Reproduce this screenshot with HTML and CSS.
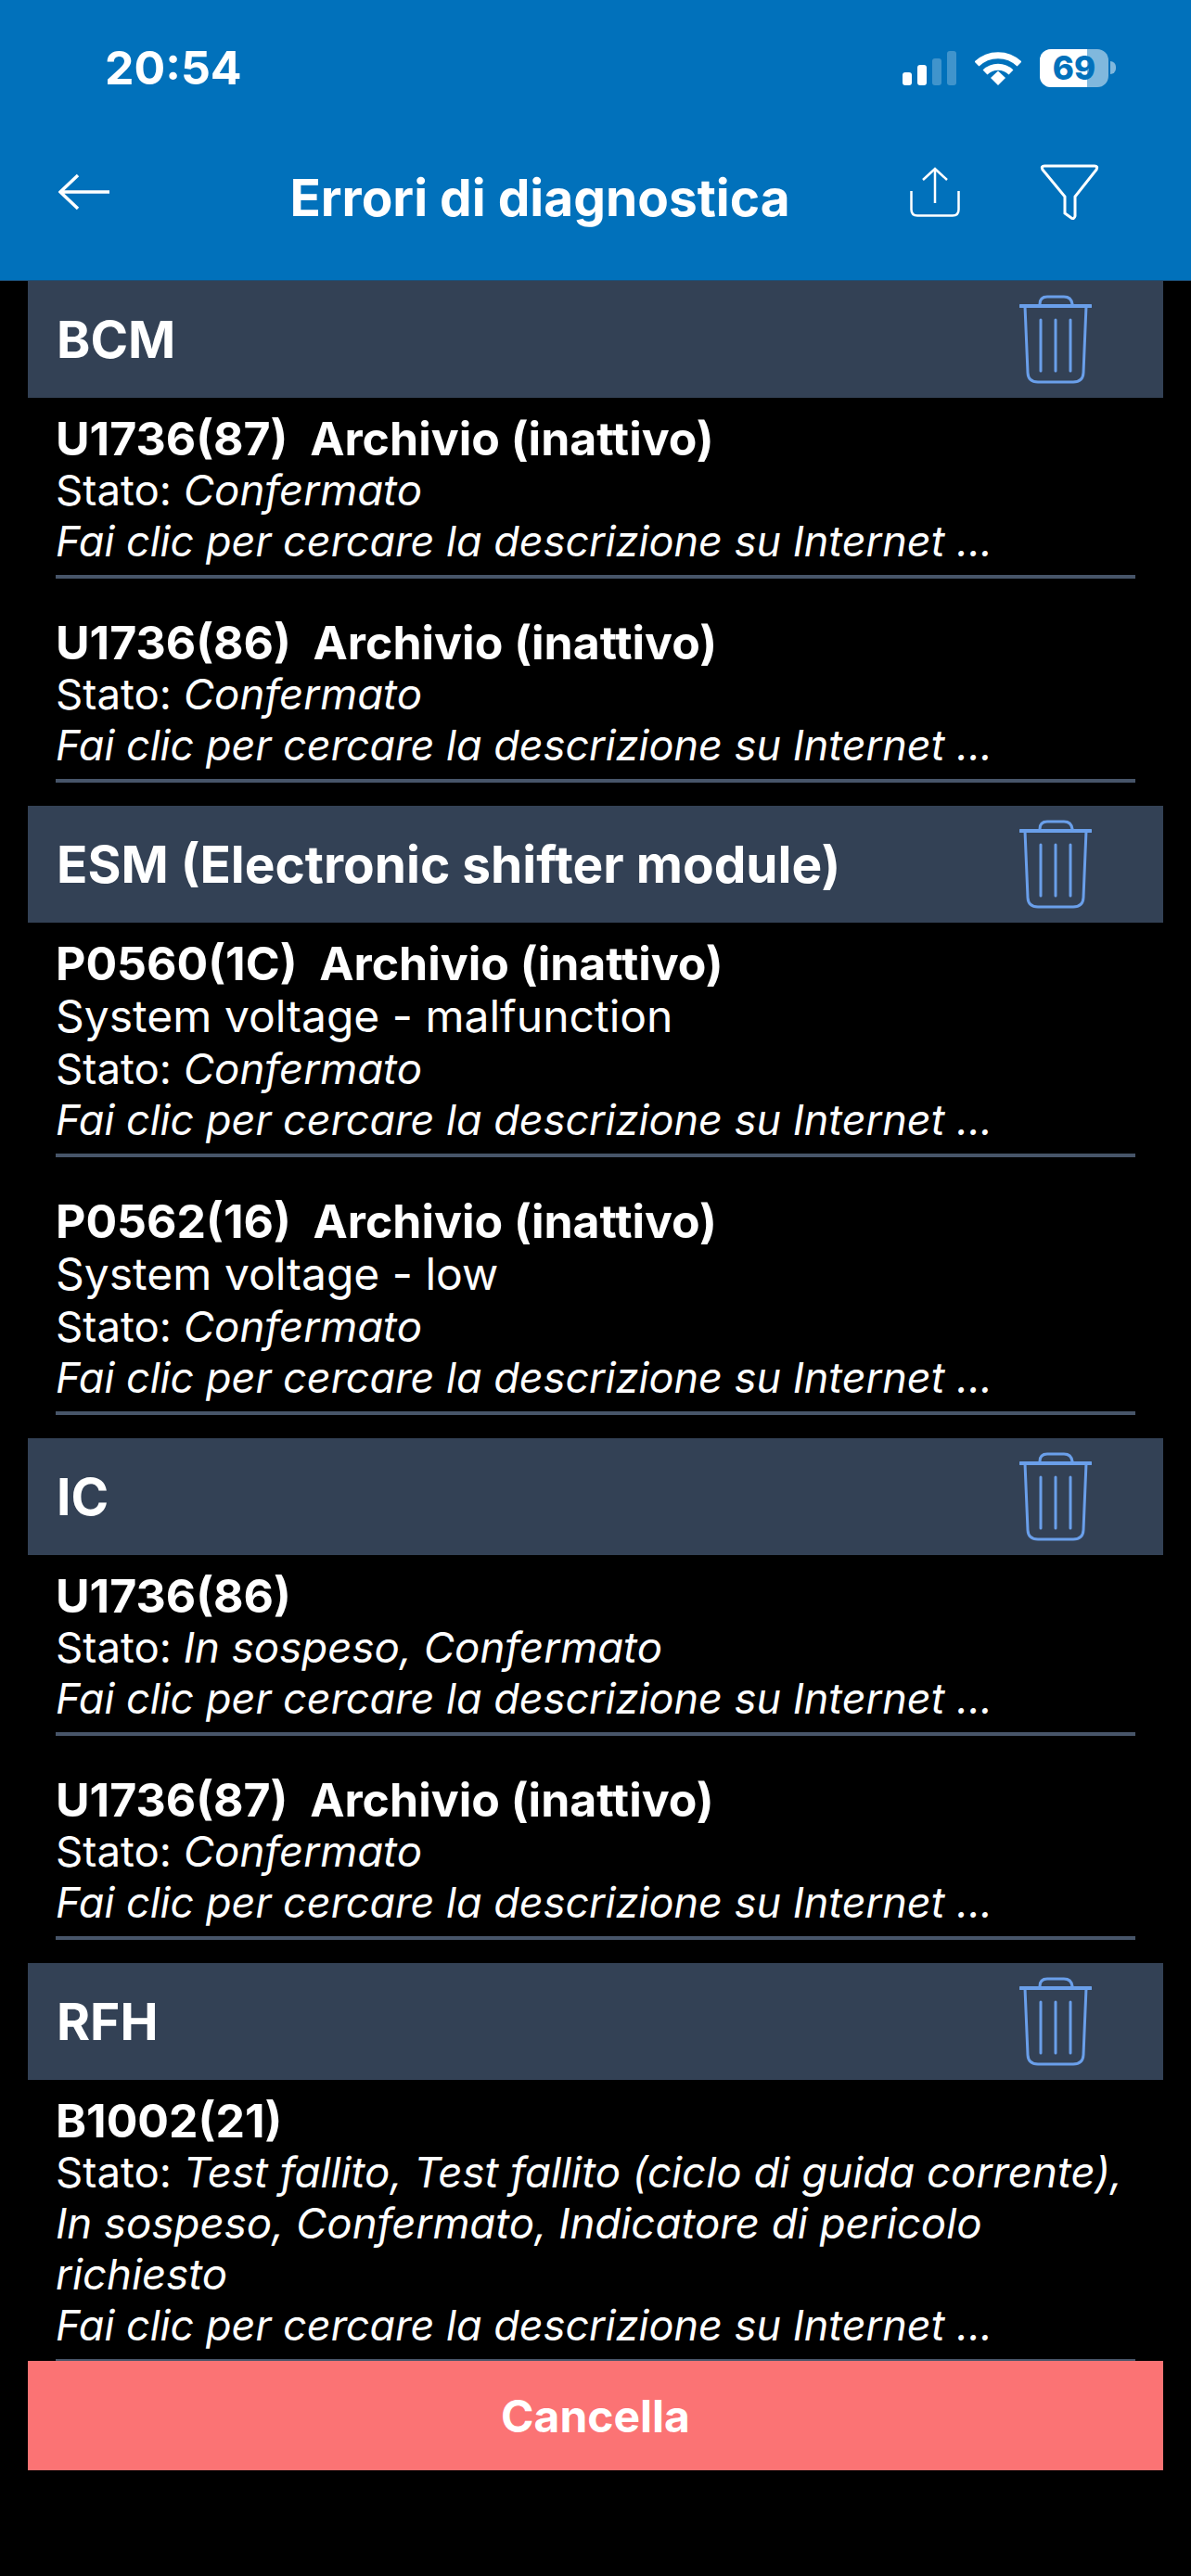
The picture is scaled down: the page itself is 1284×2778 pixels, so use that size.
FILE: index.html
```html
<html lang="en">
  <head>
    <meta charset="UTF-8" />
    <meta name="viewport" content="width=device-width, initial-scale=1.0" />
    <title>Errori di diagnostica</title>
    <link rel="stylesheet" href="styles.css">
  </head>

  <body>
    <div class="page">
      <header class="topbar">
        <div class="status">
          <span class="time">20:54</span>
          <div class="status-icons">
            <svg class="signal" width="58" height="37" viewBox="0 0 58 37">
              <rect x="0" y="23" width="10" height="14" rx="3" fill="#fff" />
              <rect x="16" y="15" width="10" height="22" rx="3" fill="#fff" />
              <rect x="32" y="8" width="10" height="29" rx="3" fill="#fff" opacity="0.25" />
              <rect x="48" y="0" width="10" height="37" rx="3" fill="#fff" opacity="0.25" />
            </svg>
            <svg class="wifi" width="50" height="37" viewBox="0 0 50 37">
              <path d="M2 14 A33 33 0 0 1 48 14" fill="none" stroke="#fff" stroke-width="7" />
              <path d="M11 23 A20 20 0 0 1 39 23" fill="none" stroke="#fff" stroke-width="7" />
              <path d="M17 29 L25 21.500 L33 29 L25 37 Z" fill="#fff" />
            </svg>
            <div class="battery">
              <div class="battery-body">
                <div class="battery-fill"></div>
                <span class="battery-num">69</span>
              </div>
              <div class="battery-nub"></div>
            </div>
          </div>
        </div>
        <nav class="navbar">
          <svg class="back" width="56" height="40" viewBox="0 0 56 40">
            <path d="M55 20 H2 M21 2 L2 20 L21 38" fill="none" stroke="#fff" stroke-width="3.500" />
          </svg>
          <h1>Errori di diagnostica</h1>
          <svg class="share" width="54" height="54" viewBox="0 0 54 54">
            <path d="M27 39 V2 M14 14 L27 2 L40 14" fill="none" stroke="#fff" stroke-width="2.500" />
            <path d="M1.500 26 V46 Q1.500 52.500 8 52.500 H46 Q52.500 52.500 52.500 46 V26" fill="none" stroke="#fff" stroke-width="2.500" />
          </svg>
          <svg class="filter" width="64" height="60" viewBox="0 0 64 60">
            <path d="M5 2 H59 Q63 2 61 6 L38 35 V56 Q37 60 34 58 L27 53 V35 L3 6 Q1 2 5 2 Z" fill="none" stroke="#fff" stroke-width="3" />
          </svg>
        </nav>
      </header>

      <main class="list">
        <section>
          <div class="group-head">
            <h2>BCM</h2>
            <svg class="trash" width="78" height="96" viewBox="0 0 78 96">
              <use href="#trash-icon" />
            </svg>
          </div>
          <div class="row">
            <p class="code">U1736(87)&nbsp; Archivio (inattivo)</p>
            <p class="state">Stato: <i>Confermato</i></p>
            <p><i>Fai clic per cercare la descrizione su Internet ...</i></p>
          </div>
          <div class="row">
            <p class="code">U1736(86)&nbsp; Archivio (inattivo)</p>
            <p class="state">Stato: <i>Confermato</i></p>
            <p><i>Fai clic per cercare la descrizione su Internet ...</i></p>
          </div>
        </section>

        <section>
          <div class="group-head">
            <h2>ESM (Electronic shifter module)</h2>
            <svg class="trash" width="78" height="96" viewBox="0 0 78 96">
              <use href="#trash-icon" />
            </svg>
          </div>
          <div class="row">
            <p class="code">P0560(1C)&nbsp; Archivio (inattivo)</p>
            <p class="desc">System voltage - malfunction</p>
            <p class="state">Stato: <i>Confermato</i></p>
            <p><i>Fai clic per cercare la descrizione su Internet ...</i></p>
          </div>
          <div class="row">
            <p class="code">P0562(16)&nbsp; Archivio (inattivo)</p>
            <p class="desc">System voltage - low</p>
            <p class="state">Stato: <i>Confermato</i></p>
            <p><i>Fai clic per cercare la descrizione su Internet ...</i></p>
          </div>
        </section>

        <section>
          <div class="group-head">
            <h2>IC</h2>
            <svg class="trash" width="78" height="96" viewBox="0 0 78 96">
              <use href="#trash-icon" />
            </svg>
          </div>
          <div class="row">
            <p class="code">U1736(86)</p>
            <p class="state">Stato: <i>In sospeso, Confermato</i></p>
            <p><i>Fai clic per cercare la descrizione su Internet ...</i></p>
          </div>
          <div class="row">
            <p class="code">U1736(87)&nbsp; Archivio (inattivo)</p>
            <p class="state">Stato: <i>Confermato</i></p>
            <p><i>Fai clic per cercare la descrizione su Internet ...</i></p>
          </div>
        </section>

        <section>
          <div class="group-head">
            <h2>RFH</h2>
            <svg class="trash" width="78" height="96" viewBox="0 0 78 96">
              <use href="#trash-icon" />
            </svg>
          </div>
          <div class="row">
            <p class="code">B1002(21)</p>
            <p class="state">Stato: <i>Test fallito, Test fallito (ciclo di guida corrente), In sospeso, Confermato, Indicatore di pericolo richiesto</i></p>
            <p><i>Fai clic per cercare la descrizione su Internet ...</i></p>
          </div>
        </section>
      </main>

      <div class="actions">
        <button class="clear">Cancella</button>
      </div>
    </div>

    <svg class="defs" width="0" height="0">
      <symbol id="trash-icon" viewBox="0 0 78 96">
        <g fill="none" stroke="#6a9fea" stroke-width="3">
          <path d="M1 12 H77" stroke-width="4" stroke-linecap="round" />
          <path d="M22 12 V10 Q22 2 30 2 H48 Q56 2 57 10 L58 12" />
          <path d="M6 12 L9 84 Q9.500 94 20 94 H58 Q68.500 94 69 84 L72 12" />
          <path d="M23 27 V82 M39 27 V82 M55 27 V82" stroke-linecap="round" />
        </g>
      </symbol>
    </svg>
  </body>
</html>
```

FILE: styles.css
```css
* {
  box-sizing: border-box;
}

html,
body {
  margin: 0;
  padding: 0;
  background-color: #000;
}

body {
  color: #fff;
  font-family: Inter, "Noto Sans", sans-serif;
}

.page {
  display: flex;
  flex-direction: column;
  width: 1284px;
  height: 2778px;
  overflow: hidden;
}

.defs {
  position: absolute;
}

/* blue top area */
.topbar {
  flex: none;
  height: 303px;
  background-color: #0171bb;
  border-bottom: 1px solid #1c4f78;
}

.status {
  display: flex;
  align-items: center;
  justify-content: space-between;
  height: 72px;
  margin-top: 37px;
  padding: 0 81px 0 113px;
}

.time {
  font-size: 50px;
  font-weight: 700;
}

.status-icons {
  display: flex;
  align-items: center;
  gap: 20px;
}

.battery {
  display: flex;
  align-items: center;
  gap: 2px;
}

.battery-body {
  position: relative;
  display: flex;
  justify-content: center;
  align-items: center;
  width: 74px;
  height: 41px;
  border-radius: 12px;
  overflow: hidden;
  background-color: rgba(255, 255, 255, 0.5);
}

.battery-fill {
  position: absolute;
  left: 0;
  top: 0;
  bottom: 0;
  width: 51px;
  background-color: #fff;
}

.battery-num {
  position: relative;
  color: #0171bb;
  font-size: 35px;
  font-weight: 800;
}

.battery-nub {
  width: 6px;
  height: 14px;
  border-radius: 0 6px 6px 0;
  background-color: rgba(255, 255, 255, 0.5);
}

.navbar {
  display: flex;
  align-items: center;
  height: 78px;
  margin-top: 59px;
  padding-left: 63px;
  padding-right: 99px;
}

.navbar h1 {
  flex: 1;
  margin: 12px 0 0;
  padding-left: 64px;
  font-size: 55px;
  font-weight: 700;
  text-align: center;
}

.share {
  margin-right: 86px;
}

/* error list */
.list {
  flex: 1;
  min-height: 0;
  overflow: hidden;
  padding: 0 30px;
}

.group-head {
  display: flex;
  align-items: center;
  justify-content: space-between;
  height: 126px;
  padding: 0 77px 0 31px;
  background-color: #334155;
}

.group-head h2 {
  margin: 0;
  font-size: 55px;
  font-weight: 700;
}

.row {
  margin: 0 30px 25px;
  padding-top: 16px;
  padding-bottom: 9px;
  border-bottom: 4px solid #475569;
}

.row p {
  margin: 0;
  font-size: 45px;
  line-height: 55px;
}

.row .state {
  font-size: 45.6px;
}

.row .code {
  font-size: 50px;
  font-weight: 700;
  line-height: 56px;
}

.row .desc {
  font-size: 48px;
  line-height: 58px;
}

/* bottom button */
.actions {
  flex: none;
  height: 232px;
  padding: 0 30px;
}

.clear {
  display: block;
  width: 100%;
  height: 118px;
  border: none;
  color: #fff;
  font-family: inherit;
  font-size: 48px;
  font-weight: 700;
  background-color: #fb7374;
}
```
